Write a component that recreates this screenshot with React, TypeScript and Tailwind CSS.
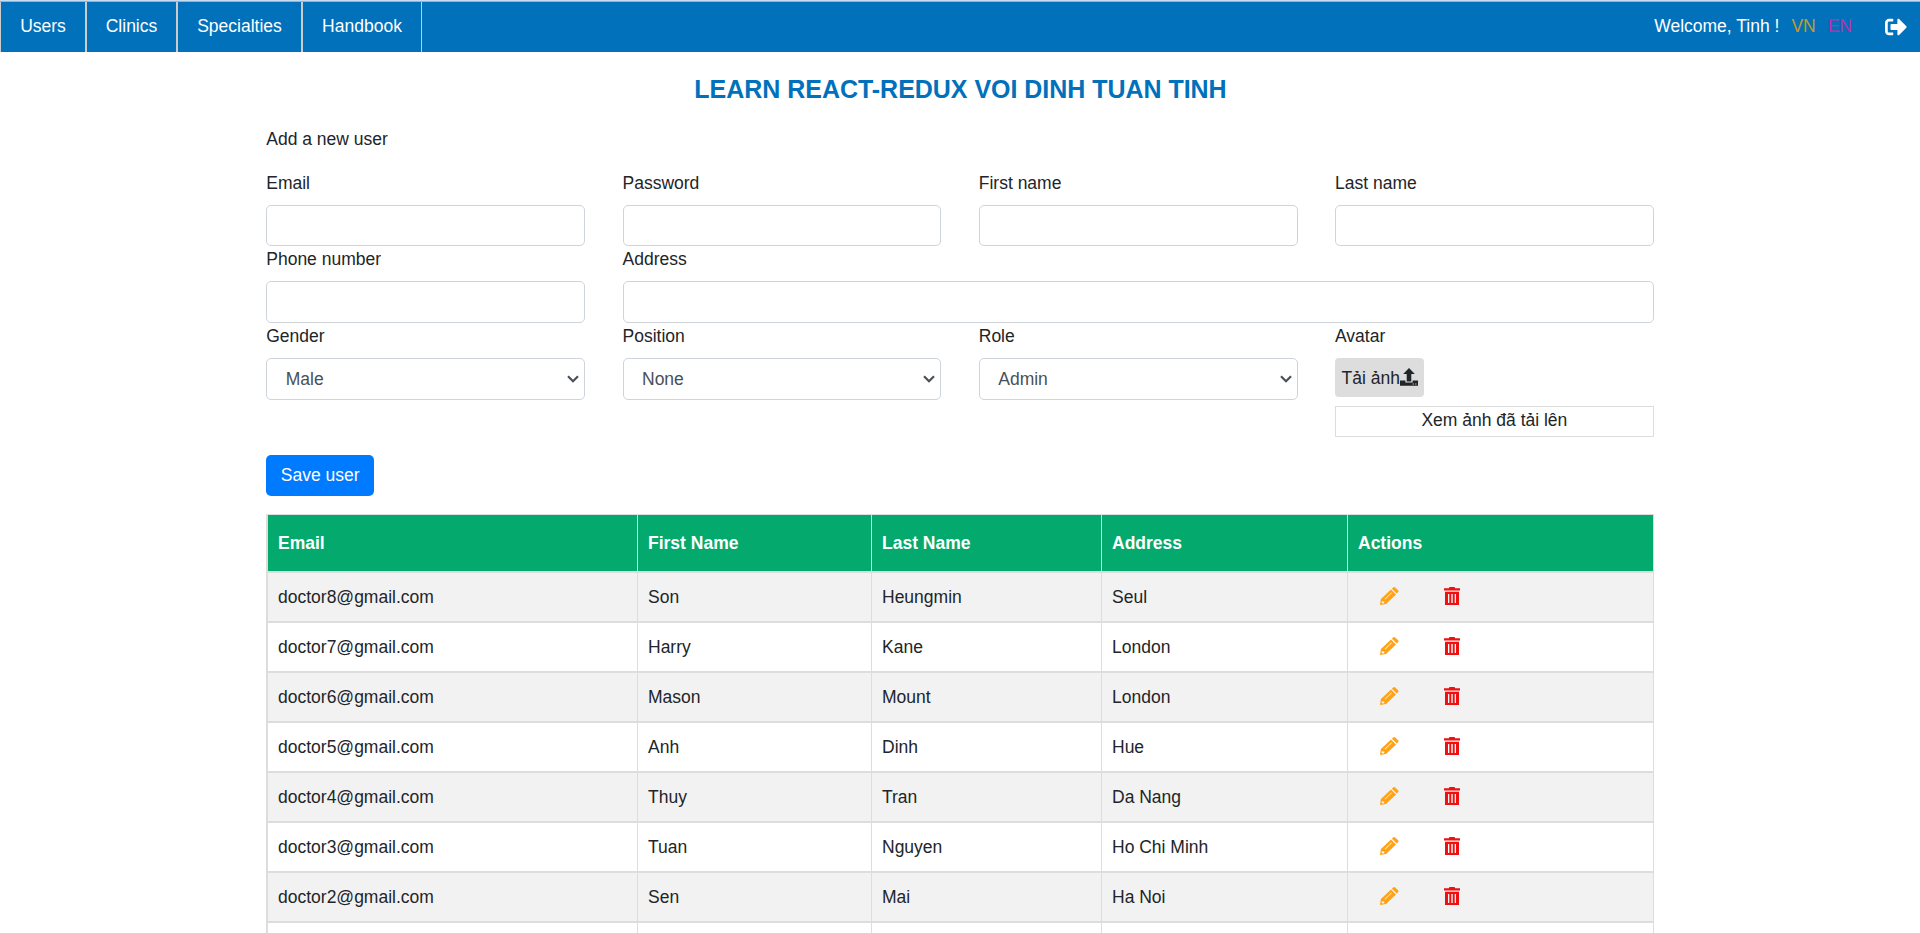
import React from "react";
import { FaSignOutAlt } from "react-icons/fa";

const font = "font-['Liberation_Sans',Arial,sans-serif]";

const menu = [
  { name: "Users", cls: "w-[86px]" },
  { name: "Clinics", cls: "w-[91px]" },
  { name: "Specialties", cls: "w-[125px]" },
  { name: "Handbook", cls: "w-[120px]" },
];

const users = [
  ["doctor8@gmail.com", "Son", "Heungmin", "Seul"],
  ["doctor7@gmail.com", "Harry", "Kane", "London"],
  ["doctor6@gmail.com", "Mason", "Mount", "London"],
  ["doctor5@gmail.com", "Anh", "Dinh", "Hue"],
  ["doctor4@gmail.com", "Thuy", "Tran", "Da Nang"],
  ["doctor3@gmail.com", "Tuan", "Nguyen", "Ho Chi Minh"],
  ["doctor2@gmail.com", "Sen", "Mai", "Ha Noi"],
];

function Label({ text }: { text: string }) {
  return <label className="mb-[8.75px] block h-[26.25px] leading-[26.25px]">{text}</label>;
}

function Field({ label, wide = false }: { label: string; wide?: boolean }) {
  return (
    <div className={wide ? "col-span-3" : ""}>
      <Label text={label} />
      <input className="block h-[41.5px] w-full rounded-[5px] border border-[#ced4da] bg-white px-4 outline-none" />
    </div>
  );
}

function SelectField({ label, value }: { label: string; value: string }) {
  return (
    <div>
      <Label text={label} />
      <div className="flex h-[42px] items-center justify-between rounded-[5px] border border-[#ced4da] bg-white pl-[18.5px] pr-[5px] text-[#495057]">
        <span className="pt-px">{value}</span>
        <svg className="mt-px h-3 w-3" viewBox="0 0 12 12" fill="none" stroke="#495057" strokeWidth="2.2">
          <path d="M1 3.2 6 8.2 11 3.2" />
        </svg>
      </div>
    </div>
  );
}

function UploadIcon() {
  return (
    <svg className="h-[18px] w-[18px]" viewBox="0 0 18 18" fill="#212529">
      <path d="M9 0 14.8 6H11.3V13.4H6.7V6H3.2Z" />
      <path d="M0 12.5H5.4V14.5H12.6V12.5H18V17.8H0ZM12.6 15.6V16.6H13.8V15.6ZM15.2 15.6V16.6H16.4V15.6Z" fillRule="evenodd" />
    </svg>
  );
}

function PencilIcon() {
  return (
    <svg className="h-[18px] w-[19px]" viewBox="0 0 19 18" fill="#ffa216">
      <path
        d="M0 18 .9 12 11 2.6 16 7.4 6 16.9ZM1.7 14.2 1.5 15.6 2.6 16.6 4.2 16.3 4.2 14.6 2.6 14.4ZM4.6 12 5.2 12.6 11.9 6.1 11.3 5.5Z"
        fillRule="evenodd"
      />
      <path d="M11.9 1.8 13.3.5Q14.2-.3 15.1.5L18.1 3.3Q18.9 4.2 18.1 5.1L16.8 6.5Z" />
    </svg>
  );
}

function TrashIcon() {
  return (
    <svg className="h-[18px] w-4" viewBox="0 0 16 18" fill="#ee1111">
      <path d="M5 1.3V.8Q5 0 5.8 0H10.2Q11 0 11 .8V1.3H16V3.4H0V1.3Z" />
      <path d="M1 4.8H15V18H1ZM4 7V16H5.3V7ZM7.3 7V16H8.7V7ZM10.7 7V16H12V7Z" fillRule="evenodd" />
    </svg>
  );
}

const columns = "grid grid-cols-[369px_233px_229px_245px_305px] gap-x-px bg-[#dddddd]";

export default function App() {
  return (
    <div className={`${font} h-[933px] w-full overflow-hidden bg-white text-[17.5px] leading-[26.25px] text-[#212529]`}>
      <div className="h-px bg-[#c9daf2]" />
      <div className="h-px bg-[#8fb4dc]" />
      <header className="flex h-[50px] items-center justify-between bg-[#0071ba] text-white">
        <nav className="flex h-full">
          {menu.map((m) => (
            <div key={m.name} className={`flex items-center justify-center border-x border-[#cccccc] ${m.cls}`}>
              <span className="pb-px">{m.name}</span>
            </div>
          ))}
        </nav>
        <div className="flex items-center pr-[13px]">
          <span className="pb-[2px]">Welcome, Tinh !</span>
          <span className="ml-3 pb-[2px] text-[#c49a2c]">VN</span>
          <span className="ml-3 pb-[2px] text-[#c02bac]">EN</span>
          <FaSignOutAlt className="mb-px ml-[33px] h-[22px] w-[22px]" />
        </div>
      </header>

      <main className="mx-auto w-[1387.5px]">
        <h1 className="mt-[18px] pl-px text-center text-[25px] font-bold leading-[38px] tracking-[-0.03px] text-[#0071ba]">
          LEARN REACT-REDUX VOI DINH TUAN TINH
        </h1>
        <p className="mb-[17.5px] mt-[18px]">Add a new user</p>

        <div className="grid grid-cols-4 gap-x-[37.5px]">
          <Field label="Email" />
          <Field label="Password" />
          <Field label="First name" />
          <Field label="Last name" />
          <Field label="Phone number" />
          <Field label="Address" wide />
          <SelectField label="Gender" value="Male" />
          <SelectField label="Position" value="None" />
          <SelectField label="Role" value="Admin" />
          <div>
            <Label text="Avatar" />
            <div className="flex h-[39px] w-[89px] items-center rounded-[4px] bg-[#dddddd] pl-[6.5px]">
              <span className="whitespace-nowrap pt-px">Tải ảnh</span>
              <UploadIcon />
            </div>
            <div className="mt-[9px] flex h-[31px] items-center justify-center border border-[#dddddd] pb-[3px]">
              Xem ảnh đã tải lên
            </div>
          </div>
        </div>

        <button className="mt-[17.75px] block h-[41px] w-[108px] rounded-[5px] bg-[#007bff] text-white">
          Save user
        </button>

        <section className="mt-[18px] w-[1388px] border-l-2 border-r border-t border-[#dddddd]">
          <div className={`${columns} h-[58px] border-b-2 border-[#dddddd] font-bold text-white`}>
            {["Email", "First Name", "Last Name", "Address", "Actions"].map((h) => (
              <div key={h} className="flex items-center bg-[#04aa6d] pl-[9.75px] pt-[1.5px]">
                {h}
              </div>
            ))}
          </div>
          {users.map((u, i) => (
            <div key={u[0]} className={`${columns} h-[50px] border-b-2 border-[#dddddd]`}>
              {u.map((v, j) => (
                <div key={j} className={`flex items-center pl-[9.75px] pt-[1.5px] ${i % 2 ? "bg-white" : "bg-[#f2f2f2]"}`}>
                  {v}
                </div>
              ))}
              <div className={`flex items-center gap-[45px] pb-px pl-8 ${i % 2 ? "bg-white" : "bg-[#f2f2f2]"}`}>
                <PencilIcon />
                <TrashIcon />
              </div>
            </div>
          ))}
          <div className={`${columns} h-[50px]`}>
            {[0, 1, 2, 3, 4].map((c) => (
              <div key={c} className="bg-white" />
            ))}
          </div>
        </section>
      </main>
    </div>
  );
}
